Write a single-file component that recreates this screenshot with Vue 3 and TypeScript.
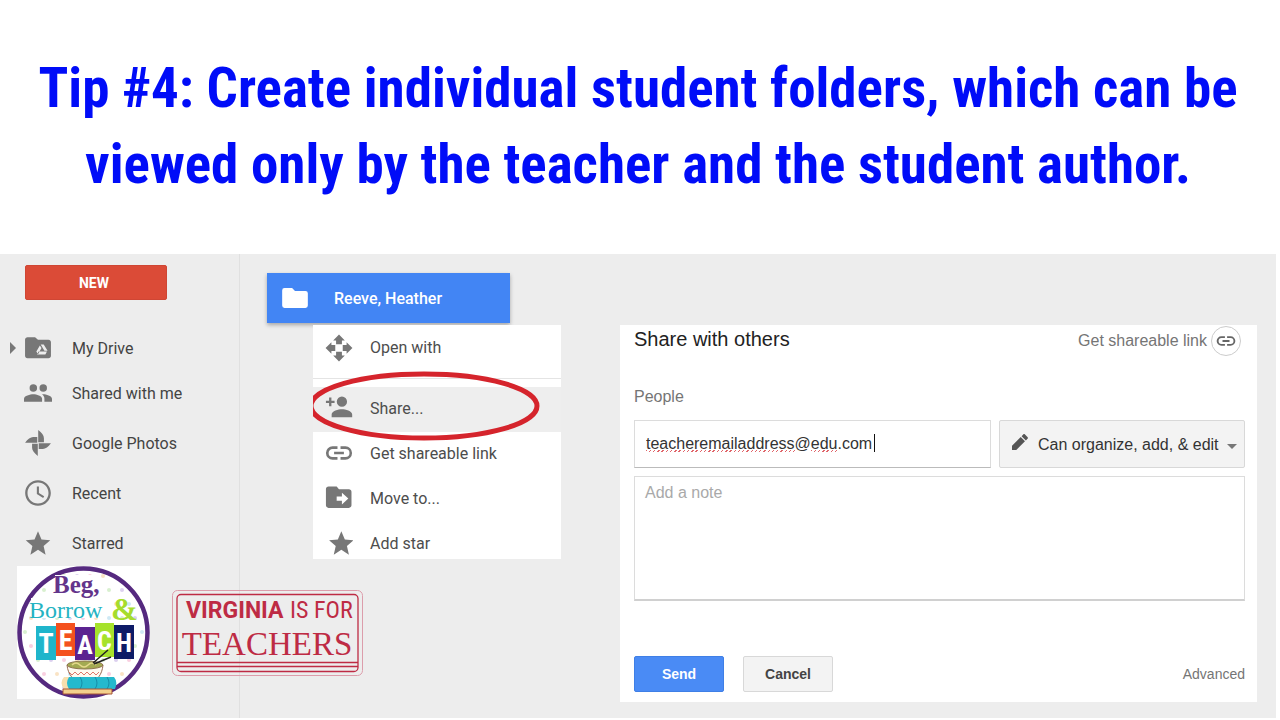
<script setup lang="ts">
import { ref } from 'vue'

interface Item {
  label: string
  icon: string
}

const icons: Record<string, string> = {
  drive:
    'M21 5h-9l-2.500-2.300H3C1.900 2.700.9 3.600.9 4.700v14c0 1.100.9 2 2.100 2h18c1.200 0 2.100-.9 2.100-2V7c0-1.100-.9-2-2.100-2zM11.200 17.500l1.300-2.400h7.200l-1.400 2.400zM14.300 9h2.600l3.300 5.400h-2.700zM13.600 9.800l1.400 2.300-3 5.200-1.400-2.400z',
  people:
    'M16.500 11a3.200 3.200 0 1 0 0-6.400 3.200 3.200 0 0 0 0 6.400zM8 11a3.200 3.200 0 1 0 0-6.400A3.200 3.200 0 0 0 8 11zM8 13c-2.700 0-8 1.300-8 4v2.500h15.500V17c0-2.700-4.800-4-7.500-4zM16.500 13l-1.200.1c1.400.9 2.200 2.100 2.200 3.900v2.500H24V17c0-2.700-5.200-4-7.500-4z',
  photos:
    'M12.200 0C15.500 2.500 17.500 5 17.500 7.500v3.800h-5.300zM24 12.200C21.500 15.500 19 17.500 16.500 17.500h-3.800v-5.300zM11.800 24C8.500 21.500 6.500 19 6.500 16.500v-3.800h5.300zM0 11.800C2.500 8.500 5 6.500 7.500 6.500h3.800v5.300z',
  clock:
    'M12 1C5.900 1 1 5.900 1 12s4.900 11 11 11 11-4.900 11-11S18.100 1 12 1zm0 20c-5 0-9-4-9-9s4-9 9-9 9 4 9 9-4 9-9 9zM12.800 6.500H11v6.400l5.400 3.300.9-1.400-4.500-2.700z',
  star: 'M12 17.800 18.500 22l-1.700-7.500L22.500 9.600l-7.500-.7L12 2 9 8.900l-7.500.7 5.700 4.900L5.500 22z',
  move:
    'M12 .5l5 5h-2.500V8.800h-5V5.500H7zM12 23.500l-5-5h2.500v-3.300h5v3.300H17zM.5 12l5-5v2.500h3.300v5H5.500V17zM23.500 12l-5 5v-2.500h-3.300v-5h3.300V7z',
  addPerson:
    'M14.500 11a4.400 4.400 0 1 0 0-8.800 4.400 4.400 0 0 0 0 8.800zM5.500 10.500V7.800H8.200V5.800H5.500V3H3.500v2.800H.8v2h2.700v2.700zM14.500 13c-3 0-8.800 1.500-8.800 4.500V20h17.600v-2.500c0-3-5.800-4.500-8.800-4.500z',
  link:
    'M3.100 12c0-1.900 1.500-3.500 3.400-3.500h4.200v-2.200H6.500a5.700 5.700 0 0 0 0 11.400h4.200v-2.200H6.500A3.500 3.500 0 0 1 3.100 12zM7.800 13.100h8.400v-2.200H7.800zM17.500 6.300h-4.200v2.200h4.200a3.500 3.500 0 0 1 0 7h-4.200v2.200h4.200a5.700 5.700 0 0 0 0-11.400z',
  moveTo:
    'M20.500 4.500H12l-2-2.300H3C1.800 2.200.8 3.100.8 4.300v14c0 1.200 1 2.200 2.200 2.200h17.500c1.200 0 2.200-1 2.200-2.200V6.700c0-1.200-1-2.200-2.200-2.200zM14.500 17.500v-3.200H10v-3.600h4.500V7.500l5.500 5z',
}

const navItems: Item[] = [
  { label: 'My Drive', icon: 'drive' },
  { label: 'Shared with me', icon: 'people' },
  { label: 'Google Photos', icon: 'photos' },
  { label: 'Recent', icon: 'clock' },
  { label: 'Starred', icon: 'star' },
]

const menuItems: Item[] = [
  { label: 'Share...', icon: 'addPerson' },
  { label: 'Get shareable link', icon: 'link' },
  { label: 'Move to...', icon: 'moveTo' },
  { label: 'Add star', icon: 'star' },
]

const email = ref('teacheremailaddress@edu.com')
const note = ref('')

const dots = Array.from({ length: 90 }, (_, i) => {
  const row = Math.floor(i / 10)
  return {
    x: 8 + (i % 10) * 13 + (row % 2) * 6,
    y: 10 + row * 14,
    fill: ['#f9cfe0', '#cfe9f5', '#dcd0ef', '#fae3c4', '#d8f0cf'][(i * 3 + row) % 5],
  }
})

const tiles = [
  { letter: 'T', x: 19, y: 60, w: 20, h: 34, fill: '#1fb5cb', size: 28 },
  { letter: 'E', x: 39, y: 57, w: 19, h: 33, fill: '#f4511e', size: 28 },
  { letter: 'A', x: 58, y: 61, w: 20, h: 33, fill: '#5b2390', size: 26 },
  { letter: 'C', x: 78, y: 57, w: 19, h: 34, fill: '#a6e22b', size: 26 },
  { letter: 'H', x: 97, y: 59, w: 20, h: 34, fill: '#0e1b66', size: 26 },
]
</script>

<template>
  <main class="slide">
    <h1 class="headline">
      Tip #4: Create individual student folders, which can be<br />
      viewed only by the teacher and the student author.
    </h1>

    <div class="workspace">
      <aside class="sidebar">
        <button class="new" type="button">NEW</button>
        <nav class="nav">
          <a v-for="item in navItems" :key="item.label" class="nav-item" href="#">
            <svg class="caret" viewBox="0 0 6 12" aria-hidden="true">
              <path v-if="item.icon === 'drive'" d="M0 0l6 6-6 6z" />
            </svg>
            <svg
              class="icon"
              :viewBox="item.icon === 'photos' ? '-1 -1 26 26' : '0 0 24 24'"
              aria-hidden="true"
            >
              <path :d="icons[item.icon]" fill-rule="evenodd" />
            </svg>
            <span>{{ item.label }}</span>
          </a>
        </nav>
      </aside>

      <section class="files">
        <button class="folder" type="button">
          <svg class="icon" viewBox="0 0 24 24" aria-hidden="true">
            <path d="M9.500 3.500H3a2 2 0 0 0-2 2v13a2 2 0 0 0 2 2h18a2 2 0 0 0 2-2V8a2 2 0 0 0-2-2h-9z" />
          </svg>
          <span>Reeve, Heather</span>
        </button>
        <div class="menu">
          <button class="menu-item" type="button">
            <svg class="icon" viewBox="0 0 24 24" aria-hidden="true"><path :d="icons.move" /></svg>
            <span>Open with</span>
          </button>
          <hr class="rule" />
          <button
            v-for="(item, i) in menuItems"
            :key="item.label"
            class="menu-item"
            :class="{ active: i === 0 }"
            type="button"
          >
            <svg
              class="icon"
              :viewBox="item.icon === 'star' ? '-2 0 24 24' : '0 0 24 24'"
              aria-hidden="true"
            >
              <path :d="icons[item.icon]" fill-rule="evenodd" />
            </svg>
            <span>{{ item.label }}</span>
          </button>
          <svg class="ring" viewBox="0 0 230 72" aria-hidden="true">
            <ellipse cx="111" cy="36" rx="113" ry="32" />
          </svg>
        </div>
      </section>

      <form class="dialog" @submit.prevent>
        <header class="dialog-head">
          <h2>Share with others</h2>
          <a class="get-link" href="#">
            Get shareable link
            <span class="disc">
              <svg viewBox="0 0 24 24" aria-hidden="true"><path :d="icons.link" /></svg>
            </span>
          </a>
        </header>
        <label class="people" for="email">People</label>
        <div class="row">
          <div class="email">
            <input id="email" v-model="email" type="text" spellcheck="false" />
            <span class="squiggle name" />
            <span class="squiggle domain" />
            <span class="cursor" />
          </div>
          <div class="access">
            <select aria-label="Access level">
              <option>Can organize, add, &amp; edit</option>
            </select>
            <svg class="pencil" viewBox="0 0 18 18" aria-hidden="true">
              <path d="M0 13.200V18h4.800L14.600 8.200 9.800 3.400zM17.400 5.400c.7-.7.700-1.300 0-2L14.600.6c-.7-.7-1.300-.7-2 0l-1.800 1.800 4.800 4.800z" />
            </svg>
            <svg class="arrow" viewBox="0 0 10 5" aria-hidden="true"><path d="M0 0h10L5 5z" /></svg>
          </div>
        </div>
        <textarea v-model="note" aria-label="Note" placeholder="Add a note" />
        <footer class="actions">
          <button class="btn primary" type="submit">Send</button>
          <button class="btn" type="button">Cancel</button>
          <a class="advanced" href="#">Advanced</a>
        </footer>
      </form>

      <div class="logos">
        <svg class="badge" viewBox="0 0 133 133" role="img" aria-label="Beg, Borrow &amp; Teach">
          <defs>
            <clipPath id="disc"><circle cx="66" cy="66" r="63" /></clipPath>
          </defs>
          <rect width="133" height="133" fill="#fff" />
          <g clip-path="url(#disc)">
            <circle v-for="(d, i) in dots" :key="i" :cx="d.x" :cy="d.y" r="2" :fill="d.fill" />
          </g>
          <circle cx="66.500" cy="66.500" r="64" fill="none" stroke="#55297f" stroke-width="4.500" />
          <rect x="38" y="9" width="44" height="20" fill="#fff" />
          <rect x="14" y="32" width="74" height="20" fill="#fff" />
          <text x="36" y="27" class="beg">Beg,</text>
          <text x="12" y="52" class="borrow">Borrow</text>
          <text x="94" y="54" class="amp">&amp;</text>
          <g v-for="t in tiles" :key="t.letter">
            <rect :x="t.x" :y="t.y" :width="t.w" :height="t.h" :fill="t.fill" />
            <text :x="t.x + t.w / 2" :y="t.y + 27" :font-size="t.size" class="tile">{{ t.letter }}</text>
          </g>
          <path d="M50 99c1 10 7 16 13 17h10c7-1 12-7 13-17z" fill="#fffaf0" stroke="#986d56" />
          <ellipse cx="68" cy="99" rx="18" ry="4" fill="#a3aa52" stroke="#8f7550" />
          <path d="M55 99q4-4 8 0t8 0 8 0" fill="none" stroke="#e5d98b" stroke-width="1.500" />
          <path d="M52 106l3 3 3-3 3 3 3-3 3 3 3-3 3 3 3-3 3 3 3-3" fill="none" stroke="#dd796b" />
          <path d="M76 97l15-13M77 98l17-7" stroke="#222" stroke-width="1.500" />
          <path d="M48 111h49q4 5 1 12H48q-5-6 0-12z" fill="#24b9cd" />
          <path d="M47 111h5q-4 6 0 12h-5q-5-6 0-12z" fill="#f7dfad" />
          <path d="M63 111q4 6 0 12M78 111q4 6 0 12M90 111q4 6 0 12" fill="none" stroke="#168da8" />
          <path d="M46 123h49v5H46z" fill="#f3d08c" stroke="#a65335" />
        </svg>
        <svg class="virginia" viewBox="0 0 191 86" role="img" aria-label="Virginia is for Teachers">
          <rect x=".5" y=".5" width="190" height="85" rx="5" fill="none" stroke="#dc9dab" />
          <rect x="5" y="4.500" width="181" height="77" rx="4" fill="none" stroke="#be2b44" stroke-width="1.300" />
          <path d="M5 72.500h181M5 76.500h181" stroke="#be2b44" stroke-width="1.500" />
          <text x="14" y="28" class="va">VIRGINIA</text>
          <text x="118" y="28" class="isfor">IS FOR</text>
          <text x="95" y="65" class="teachers">TEACHERS</text>
        </svg>
      </div>
    </div>
  </main>
</template>

<style>
body {
  margin: 0;
  background: #fff;
}
</style>

<style scoped>
* {
  box-sizing: border-box;
}
.slide {
  min-height: 100vh;
  padding: 0 4px 2px 0;
  display: flex;
  flex-direction: column;
  font-family: Roboto, 'Liberation Sans', sans-serif;
}
.headline {
  margin: 0;
  min-height: 254px;
  padding-top: 50px;
  text-align: center;
  color: #000cf8;
  font: bold 55px/76px 'Roboto Condensed', Roboto, sans-serif;
}
.workspace {
  position: relative;
  flex: 1;
  display: grid;
  grid-template-columns: 240px 294px minmax(0, 1fr);
  column-gap: 27px;
  padding-right: 19px;
  background: #ededed;
}
.sidebar {
  border-right: 1px solid #e0e0e0;
  padding-top: 11px;
}
button,
input,
select,
textarea {
  font-family: inherit;
}
.new {
  display: block;
  width: 142px;
  height: 35px;
  margin-left: 25px;
  border: 1px solid #cf4634;
  border-radius: 2px;
  background: #db4b37;
  color: #fff;
  font-weight: bold;
  font-size: 14px;
  padding: 0 4px 0 0;
}
.nav {
  display: flex;
  flex-direction: column;
  padding-top: 23px;
}
.nav-item {
  display: flex;
  align-items: center;
  height: 50px;
  padding-left: 10px;
  color: #444;
  font-size: 16px;
  text-decoration: none;
}
.nav-item:nth-child(even) {
  height: 40px;
}
.nav-item:nth-child(3),
.nav-item:nth-child(5) {
  height: 60px;
}
.caret {
  width: 6px;
  height: 12px;
  margin-right: 8px;
  fill: #777;
}
.icon {
  flex: none;
  width: 28px;
  height: 28px;
  fill: #777;
}
.nav-item .icon {
  margin-right: 20px;
}
.files {
  padding-top: 19px;
}
.folder {
  display: flex;
  align-items: center;
  gap: 25px;
  width: 243px;
  height: 50px;
  padding: 0 14px;
  border: 0;
  background: #4285f4;
  box-shadow: 0 2px 4px rgba(0, 0, 0, 0.3);
  color: #fff;
  font-size: 16px;
  font-weight: 500;
}
.folder .icon {
  fill: #fff;
}
.menu {
  position: relative;
  overflow: hidden;
  display: flex;
  flex-direction: column;
  height: 234px;
  margin: 2px 0 0 46px;
  background: #fff;
}
.menu-item {
  flex: none;
  display: flex;
  align-items: center;
  gap: 17px;
  height: 45px;
  padding: 0 12px;
  border: 0;
  background: none;
  color: #4d4d4d;
  font-size: 16px;
  text-align: left;
}
.rule ~ .menu-item {
  padding-bottom: 3px;
}
.menu-item.active {
  background: #eee;
}
.rule {
  width: 100%;
  margin: 8px 0;
  border: 0;
  border-top: 1px solid #e4e4e4;
}
.ring {
  position: absolute;
  left: 0;
  top: 45px;
  width: 230px;
  height: 72px;
  fill: none;
  stroke: #d5242c;
  stroke-width: 5;
}
.dialog {
  align-self: start;
  height: 377px;
  margin: 71px 0 0 32px;
  padding: 0 12px 10px 14px;
  display: flex;
  flex-direction: column;
  background: #fff;
  color: #222;
  font-family: 'Liberation Sans', sans-serif;
  font-size: 16px;
}
.dialog-head {
  display: flex;
  justify-content: space-between;
}
h2 {
  margin: 0;
  font-size: 20px;
  font-weight: normal;
  line-height: 28px;
}
.get-link {
  display: flex;
  align-items: center;
  gap: 4px;
  padding-right: 4px;
  padding-top: 1px;
  color: #757575;
  text-decoration: none;
}
.disc {
  display: grid;
  place-items: center;
  width: 30px;
  height: 30px;
  border: 1px solid #ccc;
  border-radius: 50%;
}
.disc svg {
  width: 20px;
  height: 20px;
  fill: #666;
}
.people {
  margin-top: 31px;
  line-height: 20px;
  color: #757575;
}
.row {
  display: flex;
  gap: 8px;
  margin: 13px 0 8px;
}
.email {
  position: relative;
  flex: 1;
}
.email input {
  display: block;
  width: 100%;
  height: 48px;
  padding: 0 11px;
  border: 1px solid #dcdcdc;
  border-bottom-color: #bbb;
  color: #333;
  font-size: 16px;
}
.squiggle {
  position: absolute;
  top: 30px;
  height: 2px;
  background: repeating-linear-gradient(135deg, #e0656a 0 1px, transparent 1px 3px);
}
.name {
  left: 12px;
  width: 149px;
}
.domain {
  left: 177px;
  width: 27px;
}
.cursor {
  position: absolute;
  left: 240px;
  top: 14px;
  width: 1px;
  height: 18px;
  background: #111;
}
.access {
  position: relative;
  width: 246px;
}
.access select {
  appearance: none;
  width: 100%;
  height: 48px;
  padding: 0 18px 0 38px;
  border: 1px solid #d8d8d8;
  border-radius: 2px;
  background: #f3f3f3;
  color: #333;
  font-size: 16px;
}
.pencil,
.arrow {
  position: absolute;
  pointer-events: none;
  fill: #555;
}
.pencil {
  left: 12px;
  top: 14px;
  width: 18px;
  height: 16px;
}
.arrow {
  right: 8px;
  top: 24px;
  width: 10px;
  height: 5px;
  fill: #777;
}
textarea {
  display: block;
  width: 100%;
  height: 125px;
  padding: 7px 10px;
  border: 1px solid #dcdcdc;
  border-bottom: 2px solid #d0d0d0;
  resize: none;
  font-size: 16px;
}
textarea::placeholder {
  color: #a9a9a9;
}
.actions {
  display: flex;
  align-items: center;
  gap: 19px;
  margin-top: auto;
}
.btn {
  width: 90px;
  height: 36px;
  border: 1px solid #d8d8d8;
  border-radius: 2px;
  background: #f3f3f3;
  color: #444;
  font-size: 14px;
  font-weight: bold;
}
.btn.primary {
  border-color: #3f7fe6;
  background: #4a8bf5;
  color: #fff;
}
.advanced {
  margin-left: auto;
  color: #757575;
  font-size: 14px;
  text-decoration: none;
}
.logos {
  position: absolute;
  left: 17px;
  bottom: 19px;
  display: flex;
  align-items: center;
  gap: 22px;
}
.badge {
  width: 133px;
  height: 133px;
}
.virginia {
  width: 191px;
  height: 86px;
}
.beg {
  font: bold 25px 'Liberation Serif', serif;
  fill: #63348b;
}
.borrow {
  font: 24px 'Liberation Serif', serif;
  fill: #24b3c2;
}
.amp {
  font: bold 32px 'Liberation Serif', serif;
  fill: #a6dc2d;
}
.tile {
  font-family: 'Roboto Condensed', Roboto, sans-serif;
  font-weight: bold;
  text-anchor: middle;
  fill: #fff;
}
.va {
  font: bold 23px Roboto, sans-serif;
  fill: #be2b44;
}
.isfor {
  font: 24px 'Roboto Condensed', Roboto, sans-serif;
  fill: #be2b44;
}
.teachers {
  font: 33px 'Liberation Serif', serif;
  text-anchor: middle;
  fill: #be2b44;
}
</style>
